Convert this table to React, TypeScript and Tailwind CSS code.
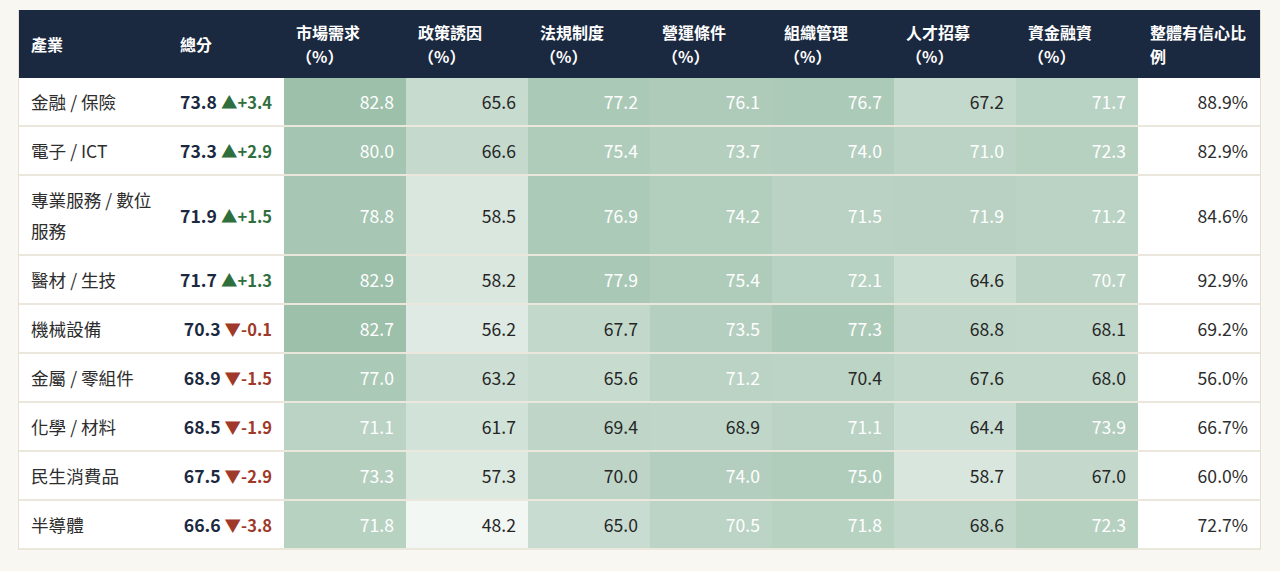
import React from "react";

type Row = {
  name: string;
  score: number;
  delta: number;
  metrics: number[];
  confidence: string;
};

const headers = ["市場需求", "政策誘因", "法規制度", "營運條件", "組織管理", "人才招募", "資金融資"];

const rows: Row[] = [
  { name: "金融 / 保險", score: 73.8, delta: 3.4, metrics: [82.8, 65.6, 77.2, 76.1, 76.7, 67.2, 71.7], confidence: "88.9%" },
  { name: "電子 / ICT", score: 73.3, delta: 2.9, metrics: [80.0, 66.6, 75.4, 73.7, 74.0, 71.0, 72.3], confidence: "82.9%" },
  { name: "專業服務 / 數位服務", score: 71.9, delta: 1.5, metrics: [78.8, 58.5, 76.9, 74.2, 71.5, 71.9, 71.2], confidence: "84.6%" },
  { name: "醫材 / 生技", score: 71.7, delta: 1.3, metrics: [82.9, 58.2, 77.9, 75.4, 72.1, 64.6, 70.7], confidence: "92.9%" },
  { name: "機械設備", score: 70.3, delta: -0.1, metrics: [82.7, 56.2, 67.7, 73.5, 77.3, 68.8, 68.1], confidence: "69.2%" },
  { name: "金屬 / 零組件", score: 68.9, delta: -1.5, metrics: [77.0, 63.2, 65.6, 71.2, 70.4, 67.6, 68.0], confidence: "56.0%" },
  { name: "化學 / 材料", score: 68.5, delta: -1.9, metrics: [71.1, 61.7, 69.4, 68.9, 71.1, 64.4, 73.9], confidence: "66.7%" },
  { name: "民生消費品", score: 67.5, delta: -2.9, metrics: [73.3, 57.3, 70.0, 74.0, 75.0, 58.7, 67.0], confidence: "60.0%" },
  { name: "半導體", score: 66.6, delta: -3.8, metrics: [71.8, 48.2, 65.0, 70.5, 71.8, 68.6, 72.3], confidence: "72.7%" },
];

// heat colour: light mint at the low end, sage green at the top
const LOW = [242, 247, 244];
const HIGH = [157, 192, 171];

function heat(v: number) {
  const t = Math.min(1, Math.max(0, (v - 48.2) / (82.9 - 48.2)));
  const c = LOW.map((l, i) => Math.round(l + (HIGH[i] - l) * t));
  return `rgb(${c[0]}, ${c[1]}, ${c[2]})`;
}

const td = "border-b-2 border-[#ebe7dd] px-3 py-2 align-middle leading-[31px]";
const th = "px-3 pt-[10px] pb-[10px] text-left align-middle text-[16px] font-bold leading-6";

export default function App() {
  return (
    <div className="min-h-screen bg-[#f8f7f2] pt-[10px] pl-[18px] pr-[19px] font-['Noto_Sans_CJK_TC',sans-serif]">
      <div className="border-x border-[#e4e0d4] bg-white">
        <table className="w-full table-fixed border-separate border-spacing-0">
          <colgroup>
            <col className="w-[149px]" />
            <col className="w-[116px]" />
            {headers.map((h) => (
              <col key={h} className="w-[122px]" />
            ))}
            <col />
          </colgroup>
          <thead>
            <tr className="bg-[#1b2940] text-white">
              <th className={th}>產業</th>
              <th className={th}>總分</th>
              {headers.map((h) => (
                <th key={h} className={th}>
                  {h}（%）
                </th>
              ))}
              <th className={th}>整體有信心比例</th>
            </tr>
          </thead>
          <tbody className="text-[17.6px]">
            {rows.map((r) => (
              <tr key={r.name}>
                <td className={`${td} text-[#2d2d2d]`}>{r.name}</td>
                <td className={`${td} text-right whitespace-nowrap`}>
                  <span className="font-bold text-[#1b2940]">{r.score.toFixed(1)}</span>{" "}
                  {r.delta >= 0 ? (
                    <span className="text-[16.5px] leading-none font-semibold text-[#2f6f3e]">▲+{r.delta.toFixed(1)}</span>
                  ) : (
                    <span className="text-[16.5px] leading-none font-semibold text-[#9f3a2b]">▼{r.delta.toFixed(1)}</span>
                  )}
                </td>
                {r.metrics.map((m, i) => (
                  <td
                    key={i}
                    className={`${td} text-right ${m >= 70.5 ? "text-white" : "text-[#262626]"}`}
                    style={{ backgroundColor: heat(m) }}
                  >
                    {m.toFixed(1)}
                  </td>
                ))}
                <td className={`${td} text-right text-[#2d2d2d]`}>{r.confidence}</td>
              </tr>
            ))}
          </tbody>
        </table>
      </div>
    </div>
  );
}
